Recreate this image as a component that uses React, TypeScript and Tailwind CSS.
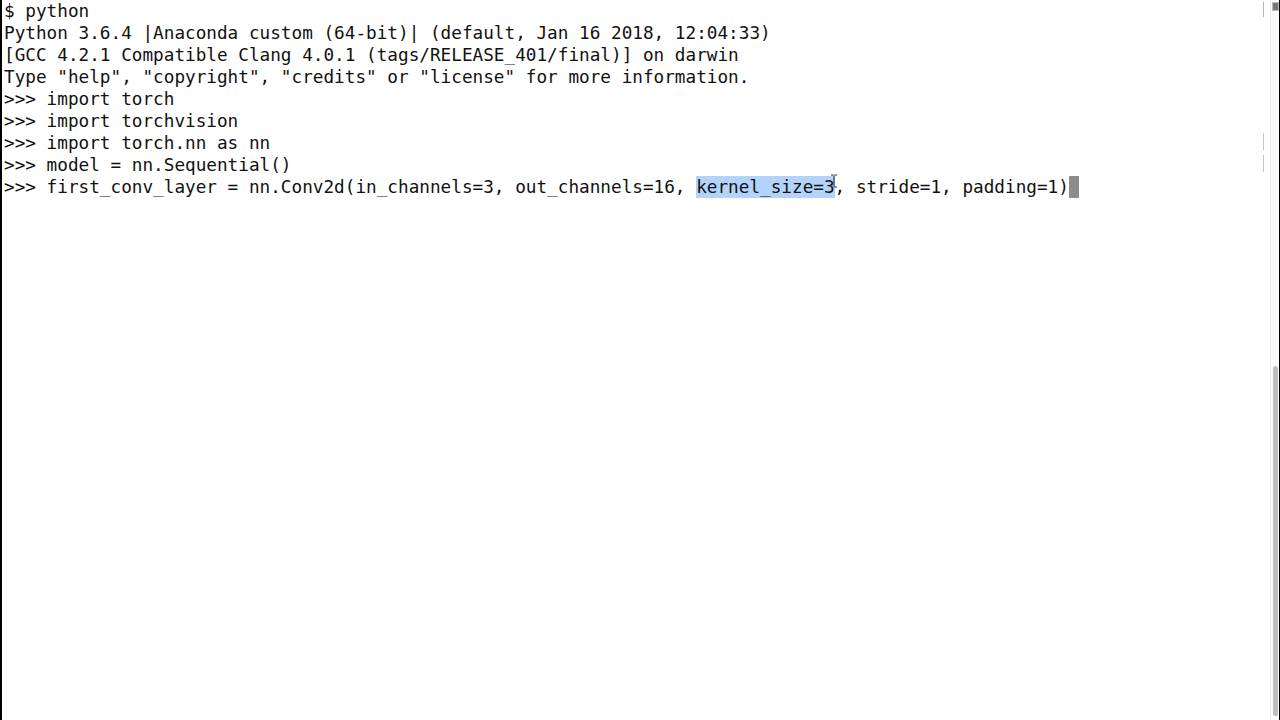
import React from 'react';

const lines: string[] = [
  '$ python',
  'Python 3.6.4 |Anaconda custom (64-bit)| (default, Jan 16 2018, 12:04:33)',
  '[GCC 4.2.1 Compatible Clang 4.0.1 (tags/RELEASE_401/final)] on darwin',
  'Type "help", "copyright", "credits" or "license" for more information.',
  '>>> import torch',
  '>>> import torchvision',
  '>>> import torch.nn as nn',
  '>>> model = nn.Sequential()',
];

const App: React.FC = () => {
  return (
    <div className="w-[1280px] h-[720px] bg-white flex overflow-hidden border-l-2 border-r border-black">
      {/* terminal text */}
      <div
        className="relative flex-1 pl-[2px] text-[17.7px] leading-[22px] text-[#111] whitespace-pre"
        style={{ fontFamily: '"DejaVu Sans Mono", "Liberation Mono", monospace' }}
      >
        {lines.map((l, i) => (
          <div key={i}>{l}</div>
        ))}
        <div className="flex">
          <span>{'>>> first_conv_layer = nn.Conv2d(in_channels=3, out_channels=16, '}</span>
          <span className="bg-[#b3d3fb]">kernel_size=3</span>
          <span>{', stride=1, padding=1)'}</span>
          <span className="w-[10px] h-[22px] bg-[#8c8c8c]" />
        </div>

        {/* mouse I-beam */}
        <svg className="absolute left-[828px] top-[174px]" width="8" height="14" viewBox="0 0 8 14">
          <path d="M1 1h2.5M4.5 1H7M4 1.5v11M1 13h2.5M4.5 13H7" stroke="#222" strokeWidth="1" fill="none" />
        </svg>

        {/* marks column */}
        <div className="absolute right-[6px] top-[2px] w-px h-[15px] bg-[#b8b8b8]" />
        <div className="absolute right-[6px] top-[133px] w-px h-[17px] bg-[#c4c4c4]" />
        <div className="absolute right-[6px] top-[155px] w-px h-[17px] bg-[#c4c4c4]" />
      </div>

      {/* scrollbar */}
      <div className="w-[9px] h-full border-l border-[#e6e6e6] bg-[#fbfbfb] flex flex-col items-center">
        <div className="mt-[2px] w-[7px] h-[9px] border border-[#bbb] bg-[#777]" />
        <div className="mt-[355px] w-[5px] h-[350px] rounded-full bg-[#bfbfbf]" />
      </div>
    </div>
  );
};

export default App;
